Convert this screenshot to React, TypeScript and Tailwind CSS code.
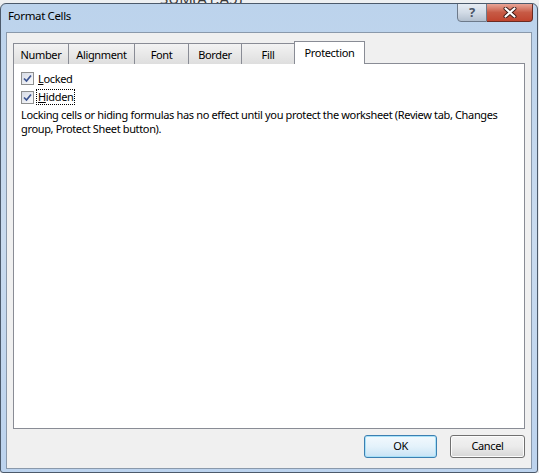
import React from 'react';

const tabs = ['Number', 'Alignment', 'Font', 'Border', 'Fill'];
const tabWidths = ['w-[56px]', 'w-[67px]', 'w-[55px]', 'w-[54px]', 'w-[54px]'];

const Check: React.FC = () => (
  <span className="w-[13px] h-[13px] border border-[#8e8f8f] bg-gradient-to-br from-[#d6dbe6] to-[#fbfbfb] flex items-center justify-center">
    <svg width="9" height="9" viewBox="0 0 9 9">
      <path d="M1 4.5 L3.5 7 L8 1.5" fill="none" stroke="#3c5491" strokeWidth="1.7" />
    </svg>
  </span>
);

export default function App() {
  return (
    <div
      className="w-[539px] h-[473px] bg-[#e9ecef] overflow-hidden text-[11px] tracking-[-0.35px] text-black"
      style={{ fontFamily: '"Noto Sans", "Open Sans", sans-serif' }}
    >
      <div className="h-[3px] bg-[#eef0f2] overflow-hidden flex">
        <span className="ml-[160px] -mt-[9px] text-[15px] leading-[15px] tracking-normal text-[#3a3a3a]">SUM(A1:A5)</span>
      </div>
      <div className="w-[538px] h-[470px] rounded-t-[6px] rounded-b-[3px] border border-[#4c5a6b] bg-gradient-to-b from-[#bcd3ec] via-[#c9dbef] to-[#bcd3ee] flex flex-col overflow-hidden">
        <div className="h-[26px] flex items-start">
          <span className="ml-[7px] mt-[4px] text-[11.5px] leading-[16px]">Format Cells</span>
          <div className="ml-auto mr-[4px] flex -mt-px">
            <div className="w-[30px] h-[19px] rounded-bl-[4px] border border-[#6d7a8a] bg-gradient-to-b from-[#e6ecf3] via-[#d2dbe6] to-[#b3c0cf] flex items-center justify-center text-[13px] text-[#4a5566] font-bold leading-none tracking-normal">
              ?
            </div>
            <div className="w-[46px] h-[19px] rounded-br-[4px] border border-l-0 border-[#6b2a22] bg-gradient-to-b from-[#e8a597] via-[#c75a45] to-[#c0442e] flex items-center justify-center">
              <svg width="14" height="11" viewBox="0 0 14 11">
                <path d="M2.5 1.5 L11.5 9.5 M11.5 1.5 L2.5 9.5" stroke="#3b1a16" strokeWidth="4" strokeLinecap="round" />
                <path d="M2.5 1.5 L11.5 9.5 M11.5 1.5 L2.5 9.5" stroke="#ffffff" strokeWidth="2.2" strokeLinecap="round" />
              </svg>
            </div>
          </div>
        </div>
        <div className="mx-[5px] mt-[2px] h-[437px] border border-[#8a99ab] bg-[#f0f0f0] flex flex-col px-[6px] pt-[9px]">
          <div className="flex items-end h-[22px] relative z-10">
            {tabs.map((t, i) => (
              <div
                key={t}
                className={`${tabWidths[i]} h-[21px] border border-[#898c95] border-b-0 -ml-px first:ml-0 bg-gradient-to-b from-[#f3f3f3] to-[#dedede] flex items-center justify-center leading-none`}
              >
                {t}
              </div>
            ))}
            <div className="w-[71px] h-[23px] border border-[#898c95] border-b-0 -ml-px bg-white flex items-center justify-center leading-none pb-[1px]">
              Protection
            </div>
          </div>
          <div className="-mt-px h-[366px] border border-[#898c95] bg-white pt-[7px] px-[7px]">
            <div className="flex items-center gap-[4px] h-[14px]">
              <Check />
              <span className="leading-none">
                <span className="underline">L</span>ocked
              </span>
            </div>
            <div className="flex items-center gap-[3px] h-[14px] mt-[5px]">
              <Check />
              <span className="leading-[14px] outline-1 outline-dotted outline-black px-px">
                <span className="underline">H</span>idden
              </span>
            </div>
            <p className="mt-[4px] leading-[14px] w-[492px]">
              Locking cells or hiding formulas has no effect until you protect the worksheet (Review tab, Changes group, Protect Sheet button).
            </p>
          </div>
          <div className="flex justify-end gap-[13px] mt-[6px]">
            <button className="w-[73px] h-[23px] rounded-[3px] border border-[#3c7fb1] bg-gradient-to-b from-[#f2f9fd] via-[#e4f2fb] to-[#c8e3f5] shadow-[inset_0_0_0_1px_#a8e1f8]">
              OK
            </button>
            <button className="w-[75px] h-[23px] rounded-[3px] border border-[#707070] bg-gradient-to-b from-[#f2f2f2] via-[#ebebeb] to-[#d6d6d6] shadow-[inset_0_0_0_1px_#fcfcfc]">
              Cancel
            </button>
          </div>
        </div>
      </div>
    </div>
  );
}
